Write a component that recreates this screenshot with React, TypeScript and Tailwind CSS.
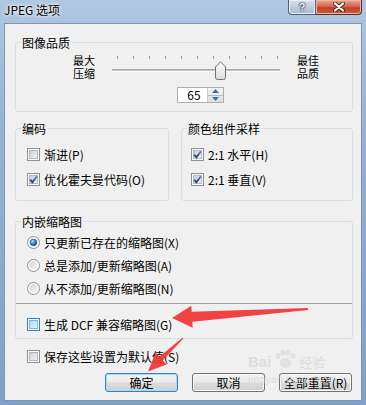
import type { ReactNode } from 'react'

const ticks = [0, 1, 2, 3, 4, 5, 6, 7, 8, 9, 10]

function CheckBox({ checked = false, hover = false }: { checked?: boolean; hover?: boolean }) {
  const id = hover ? 'cb-hover' : 'cb-normal'
  return (
    <svg width="13" height="13" viewBox="0 0 13 13" className="shrink-0">
      <defs>
        <linearGradient id={id} x1="0" y1="0" x2="1" y2="1">
          <stop offset="0" stopColor={hover ? '#a9d9f6' : '#c9cdd2'} />
          <stop offset="1" stopColor={hover ? '#e4f5fd' : '#f7f7f7'} />
        </linearGradient>
        <linearGradient id="cb-check" x1="0" y1="0" x2="0" y2="1">
          <stop offset="0" stopColor="#6f86c2" />
          <stop offset="1" stopColor="#1f3a80" />
        </linearGradient>
      </defs>
      <rect x="0.5" y="0.5" width="12" height="12" fill="#fdfdfd" stroke={hover ? '#3c7fb1' : '#8e8f8f'} />
      <rect x="2.5" y="2.5" width="8" height="8" fill={`url(#${id})`} stroke={hover ? '#79b8e0' : '#b4b7bb'} />
      {checked && (
        <path d="M3.2 6.6 L5.4 9.2 L9.9 3.2" fill="none" stroke="url(#cb-check)" strokeWidth="1.9" />
      )}
    </svg>
  )
}

function Radio({ checked = false }: { checked?: boolean }) {
  return (
    <svg width="13" height="13" viewBox="0 0 13 13" className="shrink-0">
      <defs>
        <linearGradient id="rb-bg" x1="0" y1="0" x2="1" y2="1">
          <stop offset="0" stopColor="#cdd0d4" />
          <stop offset="1" stopColor="#f8f8f8" />
        </linearGradient>
        <radialGradient id="rb-dot" cx="0.35" cy="0.3" r="0.75">
          <stop offset="0" stopColor="#b8e6fb" />
          <stop offset="0.5" stopColor="#3a8fd6" />
          <stop offset="1" stopColor="#12468f" />
        </radialGradient>
      </defs>
      <circle cx="6.5" cy="6.5" r="6" fill="#fbfbfb" stroke="#8e8f8f" />
      <circle cx="6.5" cy="6.5" r="4.2" fill="url(#rb-bg)" />
      {checked && <circle cx="6.5" cy="6.5" r="3.3" fill="url(#rb-dot)" stroke="#1d4f8c" strokeWidth="0.6" />}
    </svg>
  )
}

function Row({ children, className = '' }: { children: ReactNode; className?: string }) {
  return <div className={`flex items-center gap-[4px] h-[13px] leading-[13px] ${className}`}>{children}</div>
}

function Group({ title, className = '', children }: { title: string; className?: string; children: ReactNode }) {
  return (
    <fieldset className={`border border-[#d5dfe5] rounded-[3px] ${className}`}>
      <legend className="ml-[5px] px-[1px] leading-[13px]">{title}</legend>
      {children}
    </fieldset>
  )
}

function Button({ children, primary = false }: { children: ReactNode; primary?: boolean }) {
  return (
    <div
      className={`w-[73px] h-[19px] rounded-[3px] border flex items-center justify-center leading-[13px] bg-[linear-gradient(180deg,#f2f2f2_0%,#ebebeb_48%,#dddddd_52%,#cfcfcf_100%)] ${
        primary
          ? 'border-[#3c7fb1] shadow-[inset_0_0_0_1px_#a9dcf5]'
          : 'border-[#707070] shadow-[inset_0_0_0_1px_#fbfbfb]'
      }`}
    >
      {children}
    </div>
  )
}

export default function App() {
  return (
    <div className="relative w-[366px] h-[405px] overflow-hidden flex flex-col text-[12px] text-black font-['Noto_Sans_CJK_SC',sans-serif] bg-[linear-gradient(180deg,#afc7e1_0%,#93b2d5_35%,#7fa1c9_100%)]">
      {/* title bar */}
      <div className="h-[23px] shrink-0 flex items-start">
        <span className="ml-[4px] mt-[3px] leading-[14px] [text-shadow:0_0_5px_#fff,0_0_3px_#fff]">JPEG 选项</span>
        <div className="ml-auto mr-[4px] flex">
          <div className="w-[28px] h-[15px] rounded-bl-[4px] border border-t-0 border-[#4e5d73] bg-[linear-gradient(180deg,#d7e2ee_0%,#bccbdc_50%,#a9bcd2_100%)] shadow-[inset_0_0_0_1px_#e6eef7] flex items-center justify-center">
            <span className="font-['Liberation_Sans',sans-serif] font-bold text-[11px] leading-[11px] text-white [text-shadow:0_0_1px_#223,0_0_1px_#223,0_0_2px_#223]">?</span>
          </div>
          <div className="w-[46px] h-[15px] rounded-br-[4px] border border-t-0 border-l-0 border-[#5a2a22] bg-[linear-gradient(180deg,#e8a89a_0%,#d5684f_45%,#c3402a_55%,#cf5a3e_100%)] shadow-[inset_0_0_0_1px_#eeb5a8] flex items-center justify-center">
            <svg width="12" height="10" viewBox="0 0 12 10">
              <path d="M2 1.5 L10 8.5 M10 1.5 L2 8.5" stroke="#4a2620" strokeWidth="4" strokeLinecap="round" />
              <path d="M2 1.5 L10 8.5 M10 1.5 L2 8.5" stroke="#ffffff" strokeWidth="2.2" strokeLinecap="round" />
            </svg>
          </div>
        </div>
      </div>

      {/* client area */}
      <div className="mx-[4px] mb-[4px] flex-1 border border-[#8394aa] bg-[#f0f0f0] flex flex-col pl-[10px]">
        <Group title="图像品质" className="mt-[12px] w-[338px] pb-[8px]">
          <div className="flex items-start pt-[6px] pl-[57px]">
            <div className="w-[24px] -mt-[1px] text-[11px] leading-[13px]">
              <div>最大</div>
              <div>压缩</div>
            </div>
            <div className="relative ml-[15px] w-[168px] h-[25px]">
              <div className="ml-[5px] mt-[1px] w-[161px] flex justify-between">
                {ticks.map((t) => (
                  <div key={t} className="w-px h-[3px] bg-[#9d9d9d]" />
                ))}
              </div>
              <div className="mt-[10px] h-[3px] bg-[#c4c4c4] border-t border-[#a9a9a9] border-b border-b-white" />
              <svg className="absolute left-[103px] top-[6px]" width="11" height="19" viewBox="0 0 11 19">
                <defs>
                  <linearGradient id="thumb" x1="0" y1="0" x2="0" y2="1">
                    <stop offset="0" stopColor="#fdfdfd" />
                    <stop offset="1" stopColor="#dcdcdc" />
                  </linearGradient>
                </defs>
                <path
                  d="M0.5 6 L5.5 0.8 L10.5 6 V16.5 Q10.5 18.5 8.5 18.5 H2.5 Q0.5 18.5 0.5 16.5 Z"
                  fill="url(#thumb)"
                  stroke="#707070"
                />
              </svg>
            </div>
            <div className="ml-[17px] w-[24px] -mt-[1px] text-[11px] leading-[13px]">
              <div>最佳</div>
              <div>品质</div>
            </div>
          </div>
          <div className="ml-[161px] mt-[7px] flex h-[16px] w-[47px] border border-[#abadb3] bg-white">
            <div className="flex-1 text-center leading-[14px] pl-[3px]">65</div>
            <div className="w-[16px] flex flex-col border-l border-[#c9c9c9] bg-[linear-gradient(180deg,#f4f4f4,#dedede)]">
              <div className="flex-1 flex items-center justify-center border-b border-[#b9b9b9]">
                <svg width="7" height="4" viewBox="0 0 7 4">
                  <path d="M0 4 L3.5 0 L7 4 Z" fill="#4d6aa8" />
                </svg>
              </div>
              <div className="flex-1 flex items-center justify-center">
                <svg width="7" height="4" viewBox="0 0 7 4">
                  <path d="M0 0 L3.5 4 L7 0 Z" fill="#4d6aa8" />
                </svg>
              </div>
            </div>
          </div>
        </Group>

        <div className="mt-[10px] flex gap-[12px]">
          <Group title="编码" className="w-[154px]">
            <div className="flex flex-col gap-[12px] pl-[11px] pt-[13px] pb-[14px]">
              <Row>
                <CheckBox />
                <span>渐进(P)</span>
              </Row>
              <Row>
                <CheckBox checked />
                <span>优化霍夫曼代码(O)</span>
              </Row>
            </div>
          </Group>
          <Group title="颜色组件采样" className="w-[172px]">
            <div className="flex flex-col gap-[12px] pl-[9px] pt-[13px] pb-[14px]">
              <Row>
                <CheckBox checked />
                <span>2:1 水平(H)</span>
              </Row>
              <Row>
                <CheckBox checked />
                <span>2:1 垂直(V)</span>
              </Row>
            </div>
          </Group>
        </div>

        <Group title="内嵌缩略图" className="mt-[14px] w-[338px] pb-[7px]">
          <div className="flex flex-col gap-[10px] pl-[11px] pt-[8px]">
            <Row>
              <Radio checked />
              <span>只更新已存在的缩略图(X)</span>
            </Row>
            <Row>
              <Radio />
              <span>总是添加/更新缩略图(A)</span>
            </Row>
            <Row>
              <Radio />
              <span>从不添加/更新缩略图(N)</span>
            </Row>
          </div>
          <div className="mt-[8px] h-px bg-[#a0a0a0]" />
          <Row className="mt-[14px] pl-[11px]">
            <CheckBox hover />
            <span>生成 DCF 兼容缩略图(G)</span>
          </Row>
        </Group>

        <Row className="mt-[11px] ml-[12px]">
          <CheckBox />
          <span>保存这些设置为默认值(S)</span>
        </Row>

        <div className="mt-[10px] ml-[90px] flex gap-[14px]">
          <Button primary>确定</Button>
          <Button>取消</Button>
          <Button>全部重置(R)</Button>
        </div>
      </div>

      {/* watermark */}
      <div className="absolute left-[248px] top-[349px] pointer-events-none select-none text-[#d8d8d8] opacity-80">
        <div className="flex items-end gap-[2px]">
          <span className="font-['Liberation_Sans',sans-serif] font-bold text-[15px] leading-[14px]">Bai</span>
          <svg width="24" height="20" viewBox="0 0 24 20">
            <g fill="#dedede">
              <ellipse cx="5" cy="7" rx="2.5" ry="3" />
              <ellipse cx="10" cy="3.5" rx="2.5" ry="3" />
              <ellipse cx="15" cy="3.5" rx="2.5" ry="3" />
              <ellipse cx="20" cy="7" rx="2.5" ry="3" />
              <ellipse cx="12.5" cy="14" rx="6" ry="5" />
            </g>
          </svg>
          <span className="text-[13px] leading-[14px]">经验</span>
        </div>
        <div className="mt-[6px] font-['Liberation_Sans',sans-serif] text-[10px] leading-[10px] tracking-[0.5px]">jingyan.baidu.com</div>
      </div>

      {/* red annotation arrows */}
      <svg className="absolute inset-0 pointer-events-none" width="366" height="405" viewBox="0 0 366 405">
        <g fill="#f23a3a" opacity="0.95">
          <path d="M172 318 L191.3 305.7 L191.7 311.7 L307.9 308 L308.1 310 L192.3 321.7 L192.7 327.7 Z" />
          <path d="M148 371.5 L155.6 352.8 L159.4 356.8 L182.7 337.6 L183.3 338.4 L162.8 360.4 L166.6 364.4 Z" />
        </g>
      </svg>
    </div>
  )
}
